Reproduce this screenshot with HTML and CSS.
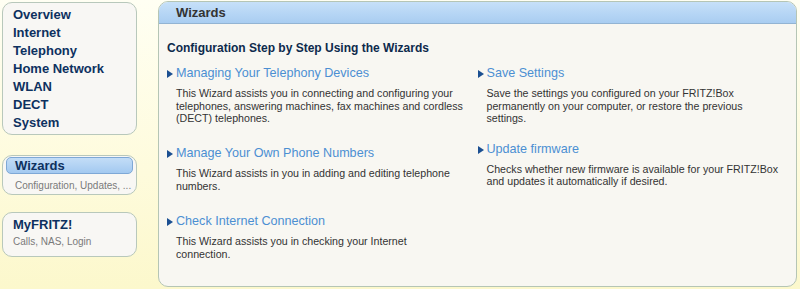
FILE: index.html
```html
<!DOCTYPE html>
<html lang="en">
<head>
    <meta charset="UTF-8">
    <meta name="viewport" content="width=device-width, initial-scale=1.0">
    <title>FRITZ!Box - Wizards</title>
    <link rel="stylesheet" href="styles.css">
</head>
<body>
    <div class="sidebar">
        <ul class="box menu">
            <li><a href="#">Overview</a></li>
            <li><a href="#">Internet</a></li>
            <li><a href="#">Telephony</a></li>
            <li><a href="#">Home Network</a></li>
            <li><a href="#">WLAN</a></li>
            <li><a href="#">DECT</a></li>
            <li><a href="#">System</a></li>
        </ul>

        <div class="box wizards-box">
            <a href="#" class="active-btn">Wizards</a>
            <p class="hint">Configuration, Updates, ...</p>
        </div>

        <div class="box myfritz-box">
            <a href="#" class="box-title">MyFRITZ!</a>
            <p class="hint">Calls, NAS, Login</p>
        </div>
    </div>

    <div class="main">
        <div class="main-header">Wizards</div>
        <div class="main-content">
            <h3>Configuration Step by Step Using the Wizards</h3>
            <div class="columns">
                <div class="column">
                    <div class="wizard">
                        <a href="#" class="wizard-link">Managing Your Telephony Devices</a>
                        <p>This Wizard assists you in connecting and configuring your telephones, answering machines, fax machines and cordless (DECT) telephones.</p>
                    </div>
                    <div class="wizard">
                        <a href="#" class="wizard-link">Manage Your Own Phone Numbers</a>
                        <p>This Wizard assists in you in adding and editing telephone numbers.</p>
                    </div>
                    <div class="wizard">
                        <a href="#" class="wizard-link">Check Internet Connection</a>
                        <p>This Wizard assists you in checking your Internet connection.</p>
                    </div>
                </div>
                <div class="column column-right">
                    <div class="wizard">
                        <a href="#" class="wizard-link">Save Settings</a>
                        <p>Save the settings you configured on your FRITZ!Box permanently on your computer, or restore the previous settings.</p>
                    </div>
                    <div class="wizard">
                        <a href="#" class="wizard-link">Update firmware</a>
                        <p>Checks whether new firmware is available for your FRITZ!Box and updates it automatically if desired.</p>
                    </div>
                </div>
            </div>
        </div>
    </div>
</body>
</html>
```

FILE: styles.css
```css
html, body {
    height: 100%;
}

body {
    font-family: "Liberation Sans", Arial, sans-serif;
    margin: 0;
    padding: 1px 3px 2px 2px;
    box-sizing: border-box;
    background: linear-gradient(to bottom, #fffff3 0%, #fefbdc 60%, #fcf8cc 100%);
    display: flex;
    gap: 21px;
}

a {
    text-decoration: none;
}

.sidebar {
    width: 135px;
    flex-shrink: 0;
    padding-top: 1px;
}

.box {
    background-color: #f8f7f4;
    border: 1px solid #b8c8bb;
    border-radius: 10px;
    box-sizing: border-box;
    margin: 0;
}

.menu {
    list-style: none;
    height: 133px;
    padding: 3px 0 0 10px;
}

.menu li a {
    display: block;
    height: 18px;
    line-height: 18px;
    font-size: 13px;
    font-weight: bold;
    color: #0d3160;
}

.wizards-box {
    margin-top: 20px;
    height: 40px;
    padding: 1px 3px 0 3px;
}

.active-btn {
    display: block;
    height: 17px;
    line-height: 16px;
    padding-left: 8px;
    box-sizing: border-box;
    font-size: 13px;
    font-weight: bold;
    color: #0d3160;
    background: linear-gradient(to bottom, #c3ddf7 0%, #a3c9f0 100%);
    border: 1px solid #7ea8d6;
    border-radius: 5px;
}

.hint {
    margin: 0;
    font-size: 10px;
    color: #7a7a7a;
    line-height: 16px;
}

.wizards-box .hint {
    padding: 4px 0 0 9px;
}

.myfritz-box {
    margin-top: 17px;
    height: 45px;
    padding: 3px 0 0 10px;
}

.box-title {
    display: block;
    font-size: 13px;
    font-weight: bold;
    color: #0d3160;
    line-height: 18px;
}

.main {
    flex: 1;
    background-color: #f8f7f2;
    border: 1px solid #b5c5b5;
    border-radius: 10px;
    overflow: hidden;
    box-sizing: border-box;
}

.main-header {
    height: 22px;
    line-height: 21px;
    padding-left: 17px;
    box-sizing: border-box;
    font-size: 13px;
    font-weight: bold;
    color: #333333;
    background: linear-gradient(to bottom, #c6e0f9 0%, #a9cdf1 100%);
    border-bottom: 1px solid #93b4d3;
}

.main-content {
    padding: 17px 8px 0 8px;
}

.main-content h3 {
    margin: 0 0 9px 0;
    font-size: 12px;
    line-height: 15px;
    color: #0d2a4c;
}

.columns {
    display: flex;
}

.column {
    width: 312px;
}

.wizard {
    margin-bottom: 20.5px;
}

.column-right .wizard {
    margin-bottom: 16px;
}

.wizard-link {
    display: block;
    position: relative;
    padding-left: 9px;
    font-size: 12.6px;
    line-height: 17px;
    color: #4c8fd2;
}

.wizard-link::before {
    content: "";
    position: absolute;
    left: 0;
    top: 5px;
    border-left: 6px solid #1b4f91;
    border-top: 4px solid transparent;
    border-bottom: 4px solid transparent;
}

.wizard p {
    margin: 5px 0 0 9px;
    max-width: 288px;
    font-size: 10.65px;
    line-height: 12.6px;
    color: #333333;
}

.column-right .wizard p {
    max-width: 298px;
}
```
